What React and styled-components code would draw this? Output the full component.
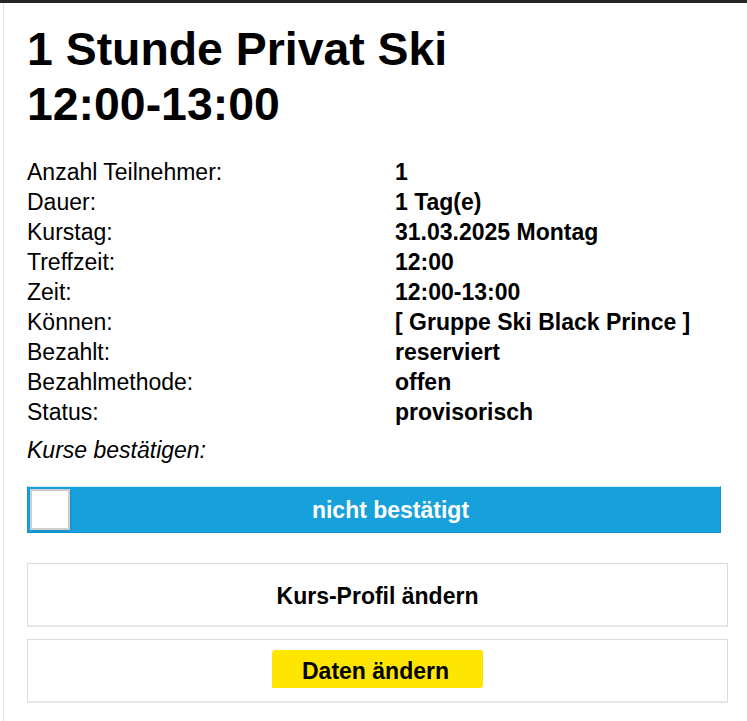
import React from "react";
import styled, { createGlobalStyle } from "styled-components";

const GlobalStyle = createGlobalStyle`
  html, body {
    margin: 0;
    padding: 0;
    background: #fff;
  }
  body {
    font-family: "Liberation Sans", Arial, sans-serif;
    color: #000;
  }
`;

const TopBar = styled.div`
  height: 3px;
  background: #262626;
`;

const Panel = styled.div`
  box-sizing: border-box;
  margin-left: 3px;
  border-left: 1px solid #e3e3e3;
  padding: 19px 19px 20px 23px;
  min-height: calc(100vh - 3px);
`;

const Title = styled.h1`
  margin: 0;
  font-size: 46.4px;
  line-height: 55px;
  font-weight: bold;
`;

const InfoGrid = styled.div`
  margin-top: 25px;
  display: grid;
  grid-template-columns: 368px 1fr;
  font-size: 23px;
  line-height: 30px;
`;

const Label = styled.div``;

const Value = styled.div`
  font-weight: bold;
`;

const Confirm = styled.div`
  margin-top: 8px;
  font-size: 23px;
  line-height: 30px;
  font-style: italic;
`;

const Switch = styled.div`
  box-sizing: border-box;
  margin-top: 21px;
  margin-right: 7px;
  height: 47px;
  display: flex;
  align-items: center;
  padding: 0 2px;
  background: #16a1dc;
  border: 1px solid #1291ca;
  border-top-color: #d8ecf6;
  cursor: pointer;
`;

const Knob = styled.div`
  box-sizing: border-box;
  width: 40px;
  height: 41px;
  background: #fff;
  border: 2px solid #cdcdcd;
  box-shadow: 1px 1px 2px rgba(0, 0, 0, 0.12);
`;

const SwitchLabel = styled.span`
  flex: 1;
  text-align: center;
  padding: 2px 7px 0 0;
  color: #fff;
  font-weight: bold;
  font-size: 23px;
`;

const Actions = styled.div`
  margin-top: 30px;
  display: flex;
  flex-direction: column;
  gap: 12px;
`;

const ActionButton = styled.div`
  box-sizing: border-box;
  height: 64px;
  display: flex;
  align-items: center;
  justify-content: center;
  padding-top: 4px;
  border: 1px solid #dcdcdc;
  border-bottom: 2px solid #e6e6e6;
  font-weight: bold;
  font-size: 23px;
  cursor: pointer;
`;

const Marker = styled.span`
  display: inline-block;
  margin-top: -7px;
  padding: 4px 34px 0 30px;
  line-height: 34px;
  background: #ffe600;
  border-radius: 4px 2px 3px 1px;
`;

const rows = [
  ["Anzahl Teilnehmer:", "1"],
  ["Dauer:", "1 Tag(e)"],
  ["Kurstag:", "31.03.2025 Montag"],
  ["Treffzeit:", "12:00"],
  ["Zeit:", "12:00-13:00"],
  ["Können:", "[ Gruppe Ski Black Prince ]"],
  ["Bezahlt:", "reserviert"],
  ["Bezahlmethode:", "offen"],
  ["Status:", "provisorisch"],
];

export default function App() {
  return (
    <>
      <GlobalStyle />
      <TopBar />
      <Panel>
        <Title>
          1 Stunde Privat Ski
          <br />
          12:00-13:00
        </Title>
        <InfoGrid>
          {rows.map(([label, value]) => (
            <React.Fragment key={label}>
              <Label>{label}</Label>
              <Value>{value}</Value>
            </React.Fragment>
          ))}
        </InfoGrid>
        <Confirm>Kurse bestätigen:</Confirm>
        <Switch>
          <Knob />
          <SwitchLabel>nicht bestätigt</SwitchLabel>
        </Switch>
        <Actions>
          <ActionButton>Kurs-Profil ändern</ActionButton>
          <ActionButton>
            <Marker>Daten ändern</Marker>
          </ActionButton>
        </Actions>
      </Panel>
    </>
  );
}
